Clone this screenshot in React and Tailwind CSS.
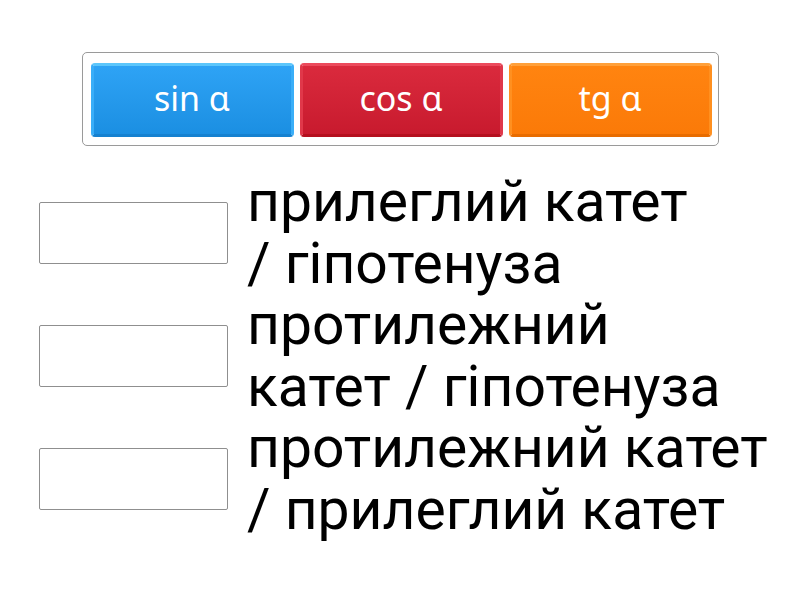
import React from 'react';

const buttons = [
  { label: 'sin α', cls: 'bg-gradient-to-b from-[#2ea3f5] to-[#1b8fe2] border-t-[#5cc6fb] border-x-[#3aaef8] border-b-[#1581d0]' },
  { label: 'cos α', cls: 'bg-gradient-to-b from-[#da2a3d] to-[#c81a2e] border-t-[#ec4a5c] border-x-[#e0384a] border-b-[#b5101f]' },
  { label: 'tg α', cls: 'bg-gradient-to-b from-[#ff8410] to-[#fb7a08] border-t-[#ffa03a] border-x-[#ff9020] border-b-[#e86c00]' },
];

const rows = [
  ['прилеглий катет', '/ гіпотенуза'],
  ['протилежний', 'катет / гіпотенуза'],
  ['протилежний катет', '/ прилеглий катет'],
];

export default function App() {
  return (
    <div className="w-[800px] h-[600px] bg-white overflow-hidden">
      <div className="flex justify-center pt-[52px]">
        <div className="w-[637px] h-[94px] border border-[#9a9a9a] rounded-[5px] pl-[8px] pt-[10px] flex gap-[6px]">
          {buttons.map((b) => (
            <div
              key={b.label}
              className={`w-[203px] h-[74px] rounded-[4px] border-[3px] flex items-center justify-center pb-[4px] text-white text-[34px] ${b.cls}`}
              style={{ fontFamily: '"Noto Sans", sans-serif' }}
            >
              {b.label}
            </div>
          ))}
        </div>
      </div>
      <div className="pt-[25px] flex flex-col">
        {rows.map((r, i) => (
          <div key={i} className="h-[123px] flex items-center">
            <div className="ml-[39px] w-[189px] h-[62px] border border-[#8f8f8f] rounded-[2px] shrink-0" />
            <div
              className="ml-[19px] text-black text-[57px] leading-[62px] whitespace-nowrap"
              style={{ fontFamily: 'Roboto, sans-serif' }}
            >
              {r[0]}
              <br />
              {r[1]}
            </div>
          </div>
        ))}
      </div>
    </div>
  );
}
